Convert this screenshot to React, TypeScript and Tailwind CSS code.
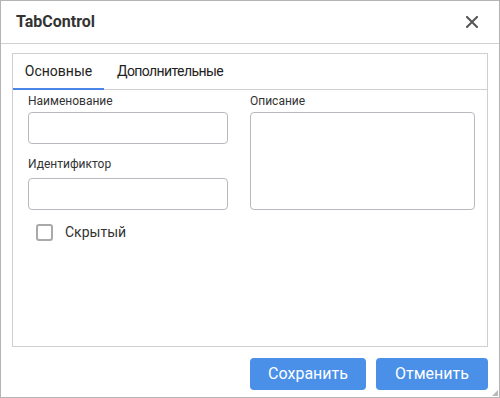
import React from 'react';

const font = { fontFamily: 'Roboto, "Noto Sans", Arial, sans-serif' };

function Field({ label, tall = false }: { label: string; tall?: boolean }) {
    return (
        <div className="flex flex-col">
            <label className="text-[12px] leading-[16px] text-[#333]">{label}</label>
            {tall ? (
                <textarea className="mt-[3px] h-[98px] w-full resize-none rounded-[4px] border border-[#b9b9c0] bg-white outline-none" />
            ) : (
                <input className="mt-[3px] h-[32px] w-full rounded-[4px] border border-[#b9b9c0] bg-white outline-none" />
            )}
        </div>
    );
}

export default function App() {
    return (
        <div style={font} className="relative flex h-[398px] w-[500px] flex-col border border-[#b4b4b4] bg-white">
            {/* Header */}
            <div className="flex h-[43px] shrink-0 items-center justify-between border-b border-[#d0d0d0] pl-[15px] pr-[21px]">
                <span className="text-[16px] font-bold text-[#333]">TabControl</span>
                <svg width="12" height="12" viewBox="0 0 12 12" className="text-[#555]">
                    <path d="M1 1L11 11M11 1L1 11" stroke="currentColor" strokeWidth="2" strokeLinecap="square" />
                </svg>
            </div>

            {/* Body */}
            <div className="flex flex-1 flex-col px-[11px] pt-[9px]">
                <div className="flex h-[294px] flex-col border border-[#cfcfcf]">
                    {/* Tabs */}
                    <div className="flex h-[36px] shrink-0 border-b border-[#cfcfcf]">
                        <div className="-mb-px flex w-[91px] items-center justify-center border-b-2 border-[#4a86e8] text-[14px] text-[#222]">
                            Основные
                        </div>
                        <div className="flex items-center px-[13px] text-[14px] tracking-[-0.6px] text-[#222]">Дополнительные</div>
                    </div>

                    {/* Content */}
                    <div className="grid grid-cols-[200px_225px] gap-x-[22px] pl-[15px] pt-[3px]">
                        <div className="flex flex-col">
                            <Field label="Наименование" />
                            <div className="mt-[12px] flex flex-col">
                                <label className="text-[12px] leading-[16px] text-[#333]">Идентификтор</label>
                                <input className="mt-[6px] h-[32px] w-full rounded-[4px] border border-[#b9b9c0] bg-white outline-none" />
                            </div>
                            <div className="mt-[12px] flex h-[20px] items-center pl-[8px]">
                                <span className="h-[17px] w-[17px] rounded-[3px] border-2 border-[#a9a9a9] bg-white" />
                                <span className="ml-[12px] text-[14px] leading-[20px] text-[#333]">Скрытый</span>
                            </div>
                        </div>
                        <Field label="Описание" tall />
                    </div>
                </div>
            </div>

            {/* Footer */}
            <div className="flex h-[50px] shrink-0 justify-end gap-[10px] pr-[11px] pt-[11px]">
                <button className="h-[32px] w-[116px] rounded-[4px] bg-[#4a8fe8] text-[16px] text-white">Сохранить</button>
                <button className="h-[32px] w-[112px] rounded-[4px] bg-[#4a8fe8] text-[16px] text-white">Отменить</button>
            </div>

            {/* Resize grip */}
            <svg width="6" height="6" viewBox="0 0 6 6" className="absolute bottom-[1px] right-[1px]">
                <path d="M6 0L6 6L0 6Z" fill="#b8b8b8" />
            </svg>
        </div>
    );
}
